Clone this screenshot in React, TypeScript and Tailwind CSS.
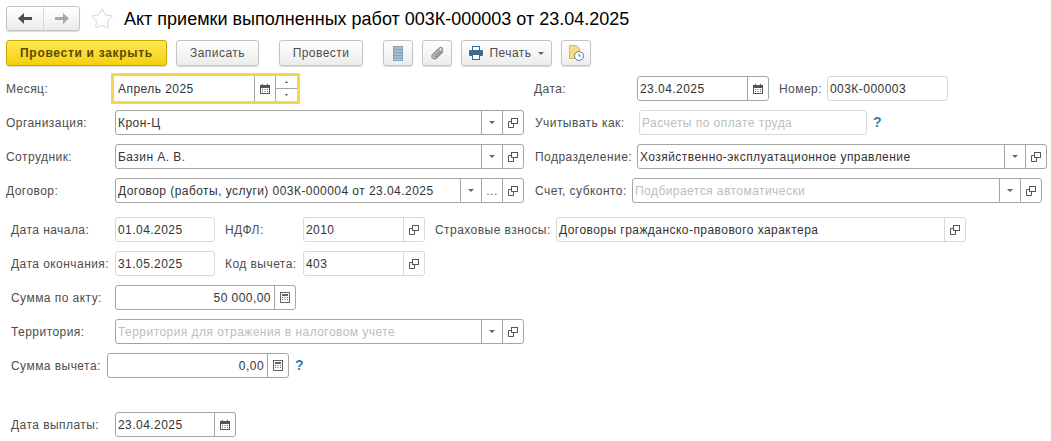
import { Star } from "lucide-react"
import type { ReactNode } from "react"

const font = "font-['Liberation_Sans',Arial,sans-serif]"

function CalendarIcon() {
  return (
    <svg width="10" height="10" viewBox="0 0 10 10">
      <rect x="0.5" y="1.5" width="9" height="8" fill="#fff" stroke="#555" />
      <rect x="0" y="1" width="10" height="3" fill="#555" />
      <rect x="2" y="0" width="1" height="2" fill="#555" />
      <rect x="7" y="0" width="1" height="2" fill="#555" />
      <path d="M2 5.500h1M4.500 5.500h1M7 5.500h1M2 7.500h1M4.500 7.500h1M7 7.500h1" stroke="#666" />
    </svg>
  )
}

function CalcIcon() {
  return (
    <svg width="10" height="11" viewBox="0 0 10 11">
      <rect x="0.5" y="0.5" width="9" height="10" fill="#fff" stroke="#666" />
      <rect x="2" y="2" width="6" height="2" fill="#666" />
      <path d="M2 5.500h1M4.500 5.500h1M7 5.500h1M2 7.500h1M4.500 7.500h1M7 7.500h1" stroke="#666" />
    </svg>
  )
}

function OpenIcon() {
  return (
    <svg width="10" height="10" viewBox="0 0 10 10" fill="none" stroke="#555">
      <rect x="3.500" y="0.500" width="6" height="5" />
      <path d="M3.500 3.500h-3v6h5v-4" />
    </svg>
  )
}

function Caret() {
  return (
    <svg width="6" height="3" viewBox="0 0 6 3">
      <path d="M0 0h6L3 3z" fill="#666" />
    </svg>
  )
}

function Stepper() {
  return (
    <div className="flex h-full w-[22px] shrink-0 flex-col border-l border-[#a5a5a5]">
      <div className="flex flex-1 items-center justify-center border-b border-[#a5a5a5]">
        <svg width="3" height="2" viewBox="0 0 3 2"><path d="M0 2h3L1.500 0z" fill="#555" /></svg>
      </div>
      <div className="flex flex-1 items-center justify-center">
        <svg width="3" height="2" viewBox="0 0 3 2"><path d="M0 0h3L1.500 2z" fill="#555" /></svg>
      </div>
    </div>
  )
}

function FieldBtn({ w = 21, line = "border-[#a5a5a5]", children }: { w?: number; line?: string; children: ReactNode }) {
  return (
    <div className={`flex h-full shrink-0 items-center justify-center border-l ${line}`} style={{ width: w }}>
      {children}
    </div>
  )
}

type FieldProps = {
  width: string
  text?: string
  placeholder?: string
  light?: boolean
  right?: boolean
  children?: ReactNode
}

function Field({ width, text, placeholder, light, right, children }: FieldProps) {
  const border = light ? "border-[#d9d9d9]" : "border-[#a5a5a5]"
  return (
    <div className={`flex h-[25px] shrink-0 items-center rounded-[3px] border bg-white ${border} ${width}`}>
      <div className={`min-w-0 flex-1 truncate px-[2px] text-[#333] ${right ? "pr-[3px] text-right" : ""}`}>
        {text}
        {placeholder && <span className="text-[#bdbdbd]">{placeholder}</span>}
      </div>
      {children}
    </div>
  )
}

function Label({ width, children }: { width: string; children: ReactNode }) {
  return <div className={`shrink-0 whitespace-nowrap text-[#4d4d4d] ${width}`}>{children}</div>
}

function Btn({ className = "", children }: { className?: string; children: ReactNode }) {
  return (
    <div className={`flex h-[26px] shrink-0 items-center justify-center rounded-[3px] border border-[#c4c4c4] bg-gradient-to-b from-white to-[#ececec] text-[#4d4d4d] shadow-[0_1px_1px_rgba(0,0,0,0.15)] ${className}`}>
      {children}
    </div>
  )
}

function Help() {
  return <span className="text-[14px] font-bold leading-none text-[#2f7fb5]">?</span>
}

export default function App() {
  return (
    <div className={`flex h-[441px] w-[1051px] flex-col overflow-hidden bg-white pl-[6px] pt-[6px] text-[12px] tracking-[0.45px] ${font}`}>
      {/* Заголовок */}
      <div className="flex h-[25px] items-center">
        <div className="flex h-[25px] w-[74px] rounded-[3px] border border-[#c4c4c4] bg-gradient-to-b from-white to-[#ececec] shadow-[0_1px_1px_rgba(0,0,0,0.15)]">
          <div className="flex w-[37px] items-center justify-center border-r border-[#d9d9d9]">
            <svg width="15" height="11" viewBox="0 0 15 11"><path d="M6 0v4h8v3H6v4L0 5.500z" fill="#4d4d4d" /></svg>
          </div>
          <div className="flex flex-1 items-center justify-center">
            <svg width="15" height="11" viewBox="0 0 15 11"><path d="M9 0v4H1v3h8v4l6-5.500z" fill="#a8a8a8" /></svg>
          </div>
        </div>
        <Star className="ml-[10px] h-[24px] w-[24px] text-[#c9c9c9]" strokeWidth={0.8} />
        <h1 className="ml-[10px] mt-[2px] whitespace-nowrap text-[18px] font-normal tracking-normal text-black">
          Акт приемки выполненных работ 003К-000003 от 23.04.2025
        </h1>
      </div>

      {/* Командная панель */}
      <div className="mt-[9px] flex items-center">
        <div className="flex h-[26px] w-[161px] items-center justify-center rounded-[3px] border border-[#c9a600] bg-gradient-to-b from-[#ffe84d] to-[#f5cf00] font-bold tracking-[0.7px] text-[#5a4a00] shadow-[0_1px_1px_rgba(0,0,0,0.15)]">
          Провести и закрыть
        </div>
        <Btn className="ml-[9px] w-[83px]">Записать</Btn>
        <Btn className="ml-[20px] w-[84px]">Провести</Btn>
        <Btn className="ml-[20px] w-[30px]">
          <svg width="10" height="15" viewBox="0 0 10 15">
            <rect width="10" height="15" fill="#7fa3bd" />
            <path d="M1 2h8M1 5h8M1 8h8M1 11h8M1 13.500h8" stroke="#c3d6e3" />
          </svg>
        </Btn>
        <Btn className="ml-[9px] w-[30px]">
          <svg width="15" height="15" viewBox="0 0 15 15" fill="none" stroke="#8a8a8a" strokeWidth="1.300">
            <path d="M13 5.500 6.500 12a2.500 2.500 0 0 1-3.800-3.300L9.500 2a1.700 1.700 0 0 1 2.500 2.400L5.700 10.700a.8.8 0 0 1-1.200-1.100L10 4" />
          </svg>
        </Btn>
        <Btn className="ml-[9px] w-[91px] gap-[6px]">
          <svg width="14" height="14" viewBox="0 0 14 14">
            <rect x="3.500" y="0.500" width="7" height="4" fill="#fff" stroke="#3e6a8c" />
            <rect x="0" y="4" width="14" height="6" rx="1" fill="#3e6a8c" />
            <rect x="3.500" y="8.500" width="7" height="5" fill="#fff" stroke="#3e6a8c" />
          </svg>
          <span>Печать</span>
          <Caret />
        </Btn>
        <Btn className="ml-[9px] w-[30px]">
          <svg width="16" height="16" viewBox="0 0 16 16">
            <path d="M1.500.500h7l3 3v10h-10z" fill="#f7dc84" stroke="#d9b94e" />
            <circle cx="11" cy="11" r="4.500" fill="#fff" stroke="#4f83ab" />
            <path d="M11 8.500V11h2" fill="none" stroke="#4f83ab" />
          </svg>
        </Btn>
      </div>

      {/* Месяц / Дата / Номер */}
      <div className="mt-[7px] flex h-[31px] items-center">
        <Label width="w-[105px]">Месяц:</Label>
        <div className="flex h-[31px] w-[189px] shrink-0 items-center border-[3px] border-[#f5d64e] bg-white pl-[4px] text-[#333]">
          <span className="flex-1">Апрель 2025</span>
          <FieldBtn><CalendarIcon /></FieldBtn>
          <Stepper />
        </div>
        <Label width="ml-[234px] w-[103px]">Дата:</Label>
        <Field width="w-[132px]" text="23.04.2025">
          <FieldBtn><CalendarIcon /></FieldBtn>
        </Field>
        <Label width="ml-[10px] w-[48px]">Номер:</Label>
        <Field width="w-[121px]" light text="003К-000003" />
      </div>

      {/* Организация / Учитывать как */}
      <div className="mt-[6px] flex h-[25px] items-center">
        <Label width="w-[109px]">Организация:</Label>
        <Field width="w-[409px]" text="Крон-Ц">
          <FieldBtn><Caret /></FieldBtn>
          <FieldBtn><OpenIcon /></FieldBtn>
        </Field>
        <Label width="ml-[11px] w-[104px]">Учитывать как:</Label>
        <Field width="w-[228px]" light placeholder="Расчеты по оплате труда" />
        <div className="ml-[6px]"><Help /></div>
      </div>

      {/* Сотрудник / Подразделение */}
      <div className="mt-[9px] flex h-[25px] items-center">
        <Label width="w-[109px]">Сотрудник:</Label>
        <Field width="w-[409px]" text="Базин А. В.">
          <FieldBtn><Caret /></FieldBtn>
          <FieldBtn><OpenIcon /></FieldBtn>
        </Field>
        <Label width="ml-[11px] w-[102px]">Подразделение:</Label>
        <Field width="w-[410px]" text="Хозяйственно-эксплуатационное управление">
          <FieldBtn><Caret /></FieldBtn>
          <FieldBtn><OpenIcon /></FieldBtn>
        </Field>
      </div>

      {/* Договор / Счет, субконто */}
      <div className="mt-[9px] flex h-[25px] items-center">
        <Label width="w-[109px]">Договор:</Label>
        <Field width="w-[409px]" text="Договор (работы, услуги) 003К-000004 от 23.04.2025">
          <FieldBtn><Caret /></FieldBtn>
          <FieldBtn><span className="text-[#666]">...</span></FieldBtn>
          <FieldBtn><OpenIcon /></FieldBtn>
        </Field>
        <Label width="ml-[11px] w-[97px]">Счет, субконто:</Label>
        <Field width="w-[410px]" placeholder="Подбирается автоматически">
          <FieldBtn><Caret /></FieldBtn>
          <FieldBtn><OpenIcon /></FieldBtn>
        </Field>
      </div>

      {/* Дата начала / НДФЛ / Страховые взносы */}
      <div className="mt-[14px] flex h-[25px] items-center">
        <Label width="pl-[5px] w-[109px]">Дата начала:</Label>
        <Field width="w-[100px]" light text="01.04.2025" />
        <Label width="ml-[10px] w-[78px]">НДФЛ:</Label>
        <Field width="w-[122px]" light text="2010">
          <FieldBtn line="border-[#d9d9d9]"><OpenIcon /></FieldBtn>
        </Field>
        <Label width="ml-[10px] w-[121px]">Страховые взносы:</Label>
        <Field width="w-[410px]" light text="Договоры гражданско-правового характера">
          <FieldBtn line="border-[#d9d9d9]"><OpenIcon /></FieldBtn>
        </Field>
      </div>

      {/* Дата окончания / Код вычета */}
      <div className="mt-[9px] flex h-[25px] items-center">
        <Label width="pl-[5px] w-[109px]">Дата окончания:</Label>
        <Field width="w-[100px]" light text="31.05.2025" />
        <Label width="ml-[10px] w-[78px]">Код вычета:</Label>
        <Field width="w-[122px]" light text="403">
          <FieldBtn line="border-[#d9d9d9]"><OpenIcon /></FieldBtn>
        </Field>
      </div>

      <div className="mt-[9px] flex h-[25px] items-center">
        <Label width="pl-[5px] w-[109px]">Сумма по акту:</Label>
        <Field width="w-[181px]" right text="50 000,00">
          <FieldBtn><CalcIcon /></FieldBtn>
        </Field>
      </div>

      <div className="mt-[9px] flex h-[25px] items-center">
        <Label width="pl-[5px] w-[109px]">Территория:</Label>
        <Field width="w-[409px]" placeholder="Территория для отражения в налоговом учете">
          <FieldBtn><Caret /></FieldBtn>
          <FieldBtn><OpenIcon /></FieldBtn>
        </Field>
      </div>

      <div className="mt-[9px] flex h-[25px] items-center">
        <Label width="pl-[5px] w-[101px]">Сумма вычета:</Label>
        <Field width="w-[182px]" right text="0,00">
          <FieldBtn><CalcIcon /></FieldBtn>
        </Field>
        <div className="ml-[6px]"><Help /></div>
      </div>

      <div className="mt-[34px] flex h-[25px] items-center">
        <Label width="pl-[5px] w-[109px]">Дата выплаты:</Label>
        <Field width="w-[121px]" text="23.04.2025">
          <FieldBtn><CalendarIcon /></FieldBtn>
        </Field>
      </div>
    </div>
  )
}
